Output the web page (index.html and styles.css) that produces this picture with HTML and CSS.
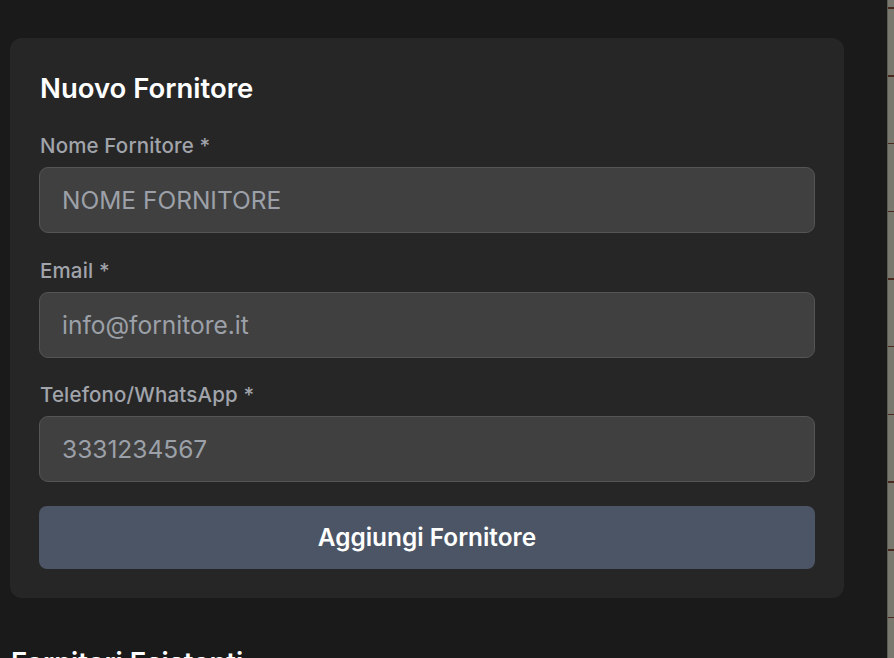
FILE: index.html
```html
<!DOCTYPE html>
<html lang="it">
<head>
<meta charset="utf-8">
<title>Fornitori</title>
<link rel="stylesheet" href="styles.css">
</head>
<body>
<div class="layout">
  <main class="main">
    <section class="card">
      <h2 class="card-title">Nuovo Fornitore</h2>
      <form class="form">
        <div class="field">
          <label class="label" for="nome">Nome Fornitore *</label>
          <input class="input" id="nome" type="text" placeholder="NOME FORNITORE">
        </div>
        <div class="field">
          <label class="label" for="email">Email *</label>
          <input class="input" id="email" type="email" placeholder="info@fornitore.it">
        </div>
        <div class="field">
          <label class="label" for="tel">Telefono/WhatsApp *</label>
          <input class="input" id="tel" type="tel" placeholder="3331234567">
        </div>
        <button class="btn" type="button">Aggiungi Fornitore</button>
      </form>
    </section>
    <h2 class="section-title">Fornitori Esistenti</h2>
  </main>
  <div class="side-strip"></div>
</div>
</body>
</html>
```

FILE: styles.css
```css
* { box-sizing: border-box; }
html, body { margin: 0; padding: 0; height: 100%; overflow: hidden; }
body {
  background: #1a1a1a;
  font-family: Inter, "Noto Sans", sans-serif;
  color: #fff;
}
.layout {
  display: flex;
  height: 100%;
}
.main {
  flex: 1;
  padding: 38px 43px 0 10px;
}
.card {
  background: #262626;
  border-radius: 12px;
  padding: 33px 29px 29.5px 29px;
}
.card-title {
  margin: 0 0 27px 1px;
  font-size: 27.5px;
  line-height: 34px;
  font-weight: 600;
  color: #fff;
}
.form {
  display: flex;
  flex-direction: column;
}
.field {
  display: flex;
  flex-direction: column;
  margin-bottom: 23.5px;
}
.label {
  font-size: 20.5px;
  line-height: 28px;
  font-weight: 500;
  letter-spacing: 0.15px;
  color: #a1a4ab;
  margin: 0 0 7px 1px;
}
.input {
  height: 66px;
  background: #404040;
  border: 1px solid #555555;
  border-radius: 9px;
  padding: 0 22px;
  font-family: inherit;
  font-size: 24.5px;
  color: #e5e5e5;
  outline: none;
}
.input::placeholder { color: #9ca0a8; }
.btn {
  height: 63px;
  background: #4b5565;
  border: none;
  border-radius: 8px;
  font-family: inherit;
  font-size: 24.4px;
  font-weight: 600;
  color: #fff;
}
.section-title {
  margin: 46.7px 0 0 1px;
  font-size: 27.5px;
  line-height: 34px;
  font-weight: 600;
  color: #fff;
}
.side-strip {
  width: 7px;
  flex: none;
  background:
    repeating-linear-gradient(to bottom, transparent 0 7.5px, #4a2a1e 7.5px 9px, transparent 9px 67.7px),
    #78786f;
  border-left: 1px solid #5c5c57;
}
```
